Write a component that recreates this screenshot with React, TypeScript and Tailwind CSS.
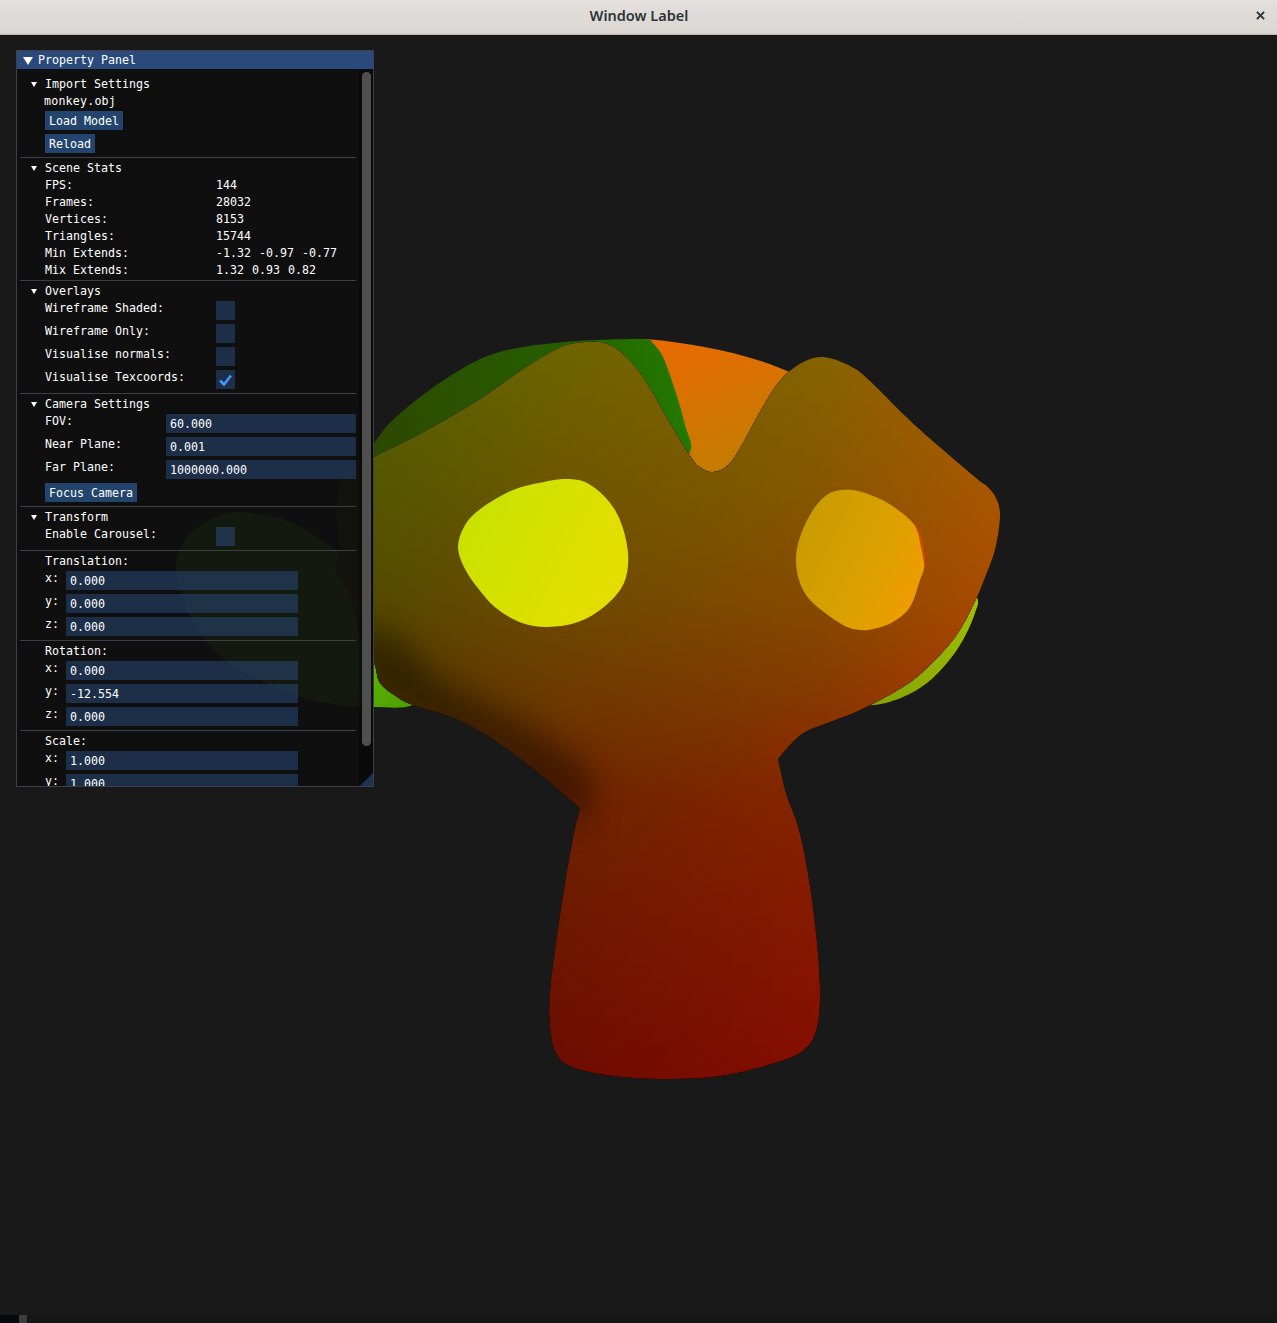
import React from "react";

type Pt = [number, number];

// closed catmull-rom through the traced outline points (a repeated point gives a corner)
const smooth = (pts: Pt[]) => {
  const n = pts.length;
  let d = `M${pts[0][0]} ${pts[0][1]}`;
  for (let i = 0; i < n; i++) {
    const p0 = pts[(i - 1 + n) % n];
    const p1 = pts[i];
    const p2 = pts[(i + 1) % n];
    const p3 = pts[(i + 2) % n];
    const c1x = p1[0] + (p2[0] - p0[0]) / 6;
    const c1y = p1[1] + (p2[1] - p0[1]) / 6;
    const c2x = p2[0] - (p3[0] - p1[0]) / 6;
    const c2y = p2[1] - (p3[1] - p1[1]) / 6;
    d += `C${c1x.toFixed(1)} ${c1y.toFixed(1)} ${c2x.toFixed(1)} ${c2y.toFixed(1)} ${p2[0]} ${p2[1]}`;
  }
  return d + "Z";
};

const headPath = smooth([
  [374, 457], [427, 430], [483, 397], [526, 367], [561, 347], [585, 342], [604, 343], [622, 353],
  [643, 377], [670, 423], [693, 460], [700, 467], [711, 472], [726, 467], [739, 450], [761, 410],
  [778, 383], [795, 367], [813, 358], [830, 358], [852, 367], [869, 380], [917, 427], [975, 477],
  [988, 487], [997, 500], [1000, 517], [995, 550], [984, 580], [977, 597], [960, 630], [940, 655],
  [917, 677], [893, 693], [860, 710], [830, 722], [805, 732], [790, 745], [778, 759], [778, 759],
  [786, 793], [799, 830], [809, 880], [817, 943], [820, 993],
  [817, 1027], [807, 1047], [784, 1060], [727, 1075], [670, 1079], [613, 1076], [572, 1067], [556, 1053],
  [550, 1027], [550, 993], [556, 943], [566, 877], [574, 833], [580, 808], [580, 808], [535, 770], [491, 738],
  [454, 718], [413, 705], [397, 697], [380, 683], [374, 663], [360, 637], [352, 600], [335, 568], [335, 568],
  [340, 552], [337, 507], [345, 475],
]);

const leftEye = smooth([
  [458, 547], [464, 527], [479, 510], [513, 490], [544, 482], [565, 479], [585, 482], [605, 497],
  [620, 520], [628, 553], [624, 583], [604, 607], [578, 622], [548, 627], [522, 623], [496, 608],
  [477, 587], [464, 567],
]);

const rightEye = smooth([
  [796, 560], [800, 537], [813, 510], [830, 493], [852, 490], [878, 498], [898, 510], [915, 526], [921, 547],
  [924, 567], [920, 580], [910, 607], [893, 622], [873, 629], [860, 630], [843, 625], [813, 603], [800, 583],
]);

const leftEar = smooth([
  [176, 575], [185, 540], [210, 520], [240, 512], [290, 522], [340, 552], [420, 600], [440, 680],
  [413, 705], [374, 707], [340, 705], [300, 697], [260, 680], [225, 660], [195, 625],
]);

const rightEar = smooth([
  [960, 570], [977, 597], [975, 613], [963, 640], [947, 663], [927, 683], [903, 697], [873, 705],
  [840, 700], [880, 620],
]);

const dome = smooth([
  [340, 490], [374, 443], [396, 417], [444, 380], [496, 353], [565, 342], [640, 339], [652, 342], [652, 342], [663, 357],
  [676, 393], [685, 425], [690, 452], [660, 470], [600, 480], [450, 500],
]);

const Monkey = () => (
  <svg viewBox="0 35 1277 1280" className="absolute inset-0 h-full w-full">
    <defs>
      <linearGradient id="domeFill" gradientUnits="userSpaceOnUse" x1="374" y1="440" x2="690" y2="400">
        <stop offset="0" stopColor="#2c4800" />
        <stop offset="0.6" stopColor="#275e00" />
        <stop offset="1" stopColor="#227a00" />
      </linearGradient>
      <linearGradient id="orangeFill" gradientUnits="userSpaceOnUse" x1="670" y1="340" x2="710" y2="470">
        <stop offset="0" stopColor="#e86a00" />
        <stop offset="1" stopColor="#c47c00" />
      </linearGradient>
      <linearGradient id="leftEarFill" gradientUnits="userSpaceOnUse" x1="374" y1="660" x2="420" y2="707">
        <stop offset="0" stopColor="#5cb400" />
        <stop offset="1" stopColor="#4c9c00" />
      </linearGradient>
      <linearGradient id="rightEarFill" gradientUnits="userSpaceOnUse" x1="970" y1="600" x2="880" y2="705">
        <stop offset="0" stopColor="#a0be00" />
        <stop offset="1" stopColor="#84a400" />
      </linearGradient>
      <linearGradient id="headRed" gradientUnits="userSpaceOnUse" x1="340" y1="0" x2="1000" y2="0">
        <stop offset="0" stopColor="#500000" />
        <stop offset="0.32" stopColor="#6c0000" />
        <stop offset="0.55" stopColor="#7a0000" />
        <stop offset="0.73" stopColor="#860000" />
        <stop offset="1" stopColor="#aa0000" />
      </linearGradient>
      <linearGradient id="headGreen" gradientUnits="userSpaceOnUse" x1="0" y1="340" x2="0" y2="1080">
        <stop offset="0" stopColor="#006400" />
        <stop offset="0.22" stopColor="#005500" />
        <stop offset="0.35" stopColor="#004a00" />
        <stop offset="0.49" stopColor="#003800" />
        <stop offset="0.62" stopColor="#002400" />
        <stop offset="0.76" stopColor="#001a00" />
        <stop offset="1" stopColor="#000c00" />
      </linearGradient>
      <linearGradient id="leftEyeFill" gradientUnits="userSpaceOnUse" x1="458" y1="510" x2="628" y2="600">
        <stop offset="0" stopColor="#c6e200" />
        <stop offset="0.6" stopColor="#dce000" />
        <stop offset="1" stopColor="#e6dc00" />
      </linearGradient>
      <linearGradient id="rightEyeFill" gradientUnits="userSpaceOnUse" x1="796" y1="530" x2="924" y2="590">
        <stop offset="0" stopColor="#c89c00" />
        <stop offset="0.6" stopColor="#dca000" />
        <stop offset="1" stopColor="#f09c00" />
      </linearGradient>
      <clipPath id="headClip">
        <path d={headPath} />
      </clipPath>
      <filter id="soft" x="-30%" y="-30%" width="160%" height="160%">
        <feGaussianBlur stdDeviation="16" />
      </filter>
    </defs>

    <path d="M645 339C690 343 745 352 792 373L800 480L690 480Z" fill="url(#orangeFill)" />
    <path d={dome} fill="url(#domeFill)" />
    <path d={leftEar} fill="url(#leftEarFill)" />
    <path d={rightEar} fill="url(#rightEarFill)" />

    <g className="isolate">
      <path d={headPath} fill="url(#headRed)" />
      <path d={headPath} fill="url(#headGreen)" className="mix-blend-plus-lighter" />
    </g>

    <g clipPath="url(#headClip)">
      <path
        d="M340 630L370 695L420 722L490 755L590 830L590 770L525 725L440 680L390 630Z"
        fill="#000"
        opacity="0.42"
        filter="url(#soft)"
      />
      <path d="M770 770L795 735L815 730L800 720L770 740Z" fill="#c03000" opacity="0.3" filter="url(#soft)" />
    </g>

    <path d={leftEye} fill="url(#leftEyeFill)" />
    <path d="M915 523L923 540L926 566L918 570Z" fill="#cc4a00" />
    <path d={rightEye} fill="url(#rightEyeFill)" />
  </svg>
);

const Arrow = ({ big }: { big?: boolean }) => (
  <svg viewBox="0 0 10 8" className={big ? "h-[8px] w-[10px] shrink-0" : "h-[5px] w-[6px] shrink-0"}>
    <polygon points="0,0 10,0 5,8" fill="#fff" />
  </svg>
);

const Sep = () => <div className="mx-[3px] h-px w-[336px] shrink-0 bg-[#3e3e47]" />;

const Header = ({ label }: { label: string }) => (
  <div className="flex h-[17px] items-center">
    <div className="ml-[14px] mr-[9px] flex w-[5px] justify-center">
      <Arrow />
    </div>
    <span>{label}</span>
  </div>
);

const Text = ({ children }: { children: React.ReactNode }) => (
  <div className="ml-[28px] flex h-[17px] items-center">{children}</div>
);

const Stat = ({ label, value }: { label: string; value: string }) => (
  <div className="ml-[28px] flex h-[17px] items-center">
    <span className="w-[171px]">{label}</span>
    <span className="[word-spacing:1px]">{value}</span>
  </div>
);

const Btn = ({ label, w }: { label: string; w: string }) => (
  <div className={`ml-[28px] flex h-[19px] items-center bg-[#4296fa]/40 pl-[4px] pt-[2px] ${w}`}>{label}</div>
);

const Check = ({ label, on }: { label: string; on?: boolean }) => (
  <div className="ml-[28px] flex h-[19px]">
    <span className="w-[171px] leading-[15px]">{label}</span>
    <div className="flex h-[19px] w-[19px] items-center justify-center bg-[#294a7a]/54">
      {on && (
        <svg viewBox="0 0 13 12" className="h-[12px] w-[13px]">
          <path d="M1 6.5L5 10.5L12 1.5" fill="none" stroke="#4296fa" strokeWidth="2.6" />
        </svg>
      )}
    </div>
  </div>
);

const Field = ({ label, value }: { label: string; value: string }) => (
  <div className="ml-[28px] flex h-[19px]">
    <span className="w-[121px] leading-[15px]">{label}</span>
    <div className="flex h-[19px] w-[190px] items-center bg-[#294a7a]/54 pl-[4px] pt-[2px]">{value}</div>
  </div>
);

const Axis = ({ label, value }: { label: string; value: string }) => (
  <div className="ml-[28px] flex h-[19px] shrink-0">
    <span className="w-[21px] leading-[15px]">{label}</span>
    <div className="flex h-[19px] w-[232px] items-center bg-[#294a7a]/54 pl-[4px] pt-[2px]">{value}</div>
  </div>
);

const Section = ({ title, children, tight }: { title: React.ReactNode; children: React.ReactNode; tight?: boolean }) => (
  <div className={tight ? "pb-px pt-[2px]" : "pb-[4px] pt-[2px]"}>
    {title}
    <div className={tight ? "flex flex-col" : "mt-px flex flex-col gap-[4px]"}>{children}</div>
  </div>
);

const AxisGroup = ({ title, values }: { title: string; values: string[] }) => (
  <Section title={<Text>{title}</Text>}>
    {values.map((v, i) => (
      <Axis key={i} label={"xyz"[i] + ":"} value={v} />
    ))}
  </Section>
);

const PropertyPanel = () => (
  <div className="absolute left-[16px] top-[15px] flex h-[737px] w-[358px] flex-col overflow-hidden border border-[#3e3e47] bg-[#0f0f0f]/94 font-['DejaVu_Sans_Mono',monospace] text-[11.63px] leading-none text-white">
    <div className="flex h-[18px] shrink-0 items-center gap-[5px] bg-[#294a7a] pl-[6px] pt-[2px]">
      <Arrow big />
      <span>Property Panel</span>
    </div>
    <div className="relative flex min-h-0 flex-1">
      <div className="w-[342px] overflow-hidden pt-[5px]">
        <Section title={<Header label="Import Settings" />}>
          <div className="-mb-[3px] -ml-px -mt-px tracking-[0.2px]">
            <Text>monkey.obj</Text>
          </div>
          <Btn label="Load Model" w="w-[78px]" />
          <Btn label="Reload" w="w-[50px]" />
        </Section>
        <Sep />
        <Section tight title={<Header label="Scene Stats" />}>
          <Stat label="FPS:" value="144" />
          <Stat label="Frames:" value="28032" />
          <Stat label="Vertices:" value="8153" />
          <Stat label="Triangles:" value="15744" />
          <Stat label="Min Extends:" value="-1.32 -0.97 -0.77" />
          <Stat label="Mix Extends:" value="1.32 0.93 0.82" />
        </Section>
        <Sep />
        <Section title={<Header label="Overlays" />}>
          <Check label="Wireframe Shaded:" />
          <Check label="Wireframe Only:" />
          <Check label="Visualise normals:" />
          <Check label="Visualise Texcoords:" on />
        </Section>
        <Sep />
        <Section title={<Header label="Camera Settings" />}>
          <Field label="FOV:" value="60.000" />
          <Field label="Near Plane:" value="0.001" />
          <Field label="Far Plane:" value="1000000.000" />
          <Btn label="Focus Camera" w="w-[92px]" />
        </Section>
        <Sep />
        <Section title={<Header label="Transform" />}>
          <Check label="Enable Carousel:" />
        </Section>
        <Sep />
        <AxisGroup title="Translation:" values={["0.000", "0.000", "0.000"]} />
        <Sep />
        <AxisGroup title="Rotation:" values={["0.000", "-12.554", "0.000"]} />
        <Sep />
        <AxisGroup title="Scale:" values={["1.000", "1.000", "1.000"]} />
      </div>
      <div className="w-[14px] bg-[#050505]/50 pl-[3px] pt-[3px]">
        <div className="h-[674px] w-[9px] rounded-[5px] bg-[#4f4f4f]" />
      </div>
      <svg viewBox="0 0 12 12" className="absolute bottom-0 right-0 h-[13px] w-[13px]">
        <polygon points="12,0 12,12 0,12" fill="#1d3554" />
      </svg>
    </div>
  </div>
);

export default function App() {
  return (
    <div className="flex h-[1323px] w-[1277px] flex-col overflow-hidden bg-[#191919]">
      <div className="flex h-[35px] shrink-0 items-center border-b border-[#bfb8b1] bg-gradient-to-b from-[#e3e0dd] to-[#dad6d2] pb-[4px] pr-[12px]">
        <div className="flex-1 pl-[22px] text-center font-['Noto_Sans',sans-serif] text-[14.5px] font-semibold leading-[20px] text-[#2e3436]">
          Window Label
        </div>
        <svg viewBox="0 0 10 10" className="mt-px h-[9px] w-[9px]">
          <path d="M1 1L9 9M9 1L1 9" fill="none" stroke="#2e3436" strokeWidth="2.2" />
        </svg>
      </div>
      <div className="relative flex-1">
        <Monkey />
        <PropertyPanel />
      </div>
      <div className="flex h-[8px] shrink-0 bg-[#161616]">
        <div className="w-[19px] bg-[#060a0d]" />
        <div className="w-[8px] bg-[#3c3c3c]" />
      </div>
    </div>
  );
}
